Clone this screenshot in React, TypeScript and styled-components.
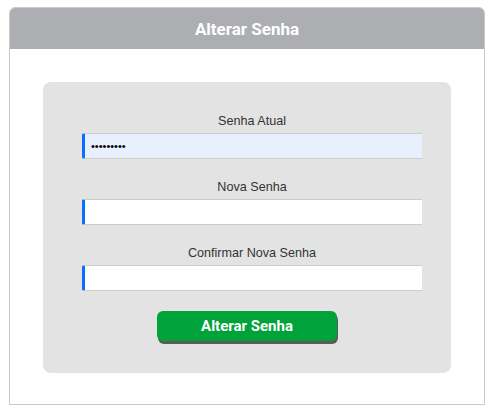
import React from 'react';
import styled, { createGlobalStyle } from 'styled-components';

const GlobalStyle = createGlobalStyle`
  body {
    margin: 0;
    background: #ffffff;
    font-family: 'Liberation Sans', Arial, sans-serif;
  }
`;

const Page = styled.div({
  padding: '7px 0 0 9px',
});

const Card = styled.div({
  width: '476px',
  height: '398px',
  boxSizing: 'border-box',
  border: '1px solid #c9c9c9',
  borderRadius: '6px 6px 0 0',
  display: 'flex',
  flexDirection: 'column',
  background: '#ffffff',
});

const Header = styled.div({
  height: '41px',
  background: '#adaeb2',
  borderRadius: '5px 5px 0 0',
  display: 'flex',
  alignItems: 'center',
  justifyContent: 'center',
  color: '#ffffff',
  fontFamily: 'Roboto, sans-serif',
  fontWeight: 700,
  fontSize: '17px',
});

const Body = styled.div({
  padding: '33px 0 0 33px',
});

const Panel = styled.form({
  width: '408px',
  height: '291px',
  boxSizing: 'border-box',
  background: '#e3e3e3',
  borderRadius: '8px',
  padding: '31px 0 0 39px',
  display: 'flex',
  flexDirection: 'column',
});

const Field = styled.div({
  width: '340px',
  display: 'flex',
  flexDirection: 'column',
  marginBottom: '20px',
});

const Label = styled.label({
  display: 'block',
  textAlign: 'center',
  fontSize: '12.6px',
  lineHeight: '16px',
  color: '#333333',
  marginBottom: '4px',
});

const Input = styled.input<{ $filled?: boolean }>(({ $filled }) => ({
  height: '26px',
  boxSizing: 'border-box',
  border: 'none',
  borderTop: '1px solid #cccccc',
  borderBottom: '1px solid #cccccc',
  borderLeft: '3px solid #0d6efd',
  borderRadius: '2px 0 0 2px',
  background: $filled ? '#e8f0fe' : '#ffffff',
  padding: '0 6px',
  fontSize: '11px',
  color: '#000000',
  outline: 'none',
}));

const Button = styled.button({
  alignSelf: 'center',
  marginLeft: '-39px',
  width: '180px',
  height: '30px',
  border: 'none',
  borderRadius: '6px',
  background: '#00a33a',
  boxShadow: '1px 3px 0 #5b5b5b',
  color: '#ffffff',
  fontFamily: 'Roboto, sans-serif',
  fontWeight: 700,
  fontSize: '15px',
  cursor: 'pointer',
});

const App: React.FC = () => {
  return (
    <Page>
      <GlobalStyle />
      <Card>
        <Header>Alterar Senha</Header>
        <Body>
          <Panel onSubmit={(e) => e.preventDefault()}>
            <Field>
              <Label>Senha Atual</Label>
              <Input type="password" defaultValue="123456789" $filled />
            </Field>
            <Field>
              <Label>Nova Senha</Label>
              <Input type="password" />
            </Field>
            <Field>
              <Label>Confirmar Nova Senha</Label>
              <Input type="password" />
            </Field>
            <Button type="submit">Alterar Senha</Button>
          </Panel>
        </Body>
      </Card>
    </Page>
  );
};

export default App;
